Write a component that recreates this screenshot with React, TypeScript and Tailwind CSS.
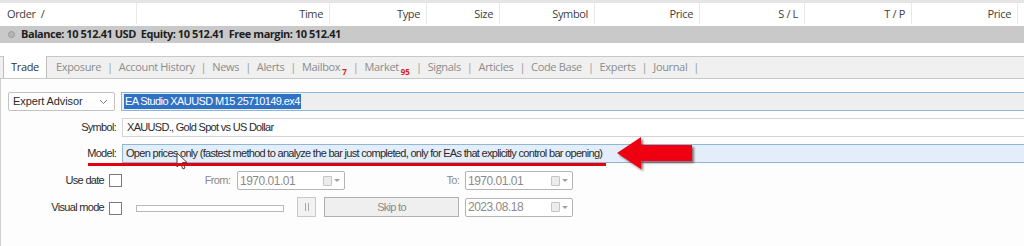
import React from "react";

const uiFont = { fontFamily: '"Open Sans", "Noto Sans", sans-serif' };
const formFont = { fontFamily: '"Liberation Sans", Arial, sans-serif' };

type Col = { label: string; width: string; align: "left" | "right" };

const columns: Col[] = [
  { label: "Order  /", width: "w-[137px]", align: "left" },
  { label: "Time", width: "w-[193px]", align: "right" },
  { label: "Type", width: "w-[97px]", align: "right" },
  { label: "Size", width: "w-[73px]", align: "right" },
  { label: "Symbol", width: "w-[95px]", align: "right" },
  { label: "Price", width: "w-[105px]", align: "right" },
  { label: "S / L", width: "w-[105px]", align: "right" },
  { label: "T / P", width: "w-[107px]", align: "right" },
  { label: "Price", width: "w-[106px]", align: "right" },
];

const tabs: { label: string; badge?: string }[] = [
  { label: "Exposure" },
  { label: "Account History" },
  { label: "News" },
  { label: "Alerts" },
  { label: "Mailbox", badge: "7" },
  { label: "Market", badge: "95" },
  { label: "Signals" },
  { label: "Articles" },
  { label: "Code Base" },
  { label: "Experts" },
  { label: "Journal" },
];

function Checkbox() {
  return <div className="h-[13px] w-[13px] shrink-0 border border-[#7a7a7a] bg-white" />;
}

function DateInput({ value }: { value: string }) {
  return (
    <div className="flex h-[19px] w-[108px] shrink-0 items-center justify-between rounded-[2px] border border-[#b4b4b4] bg-white pl-[2px] pr-[4px]">
      <span className="text-[12px] tracking-[-0.5px] text-[#8a8a8a]" style={formFont}>
        {value}
      </span>
      <span className="flex items-center gap-[2px]">
        <span className="h-[10px] w-[9px] rounded-[1px] border border-[#c4c4c4] bg-[#ececec]" />
        <span className="h-0 w-0 border-x-[3px] border-t-[3px] border-x-transparent border-t-[#a0a0a0]" />
      </span>
    </div>
  );
}

export default function App() {
  return (
    <div className="relative h-[246px] w-[1024px] overflow-hidden bg-white text-[#333]">
      {/* column header */}
      <div className="border-t-[3px] border-[#e4e4e4]">
        <div className="flex h-[21px] items-center text-[11px] tracking-[-0.35px] text-[#404040]" style={uiFont}>
          {columns.map((c, i) => (
            <div
              key={i}
              className={`${c.width} h-full shrink-0 border-r border-[#e8e8e8] leading-[21px] ${
                c.align === "right" ? "pr-[6px] text-right" : "pl-[7px] text-left whitespace-pre"
              }`}
            >
              {c.label}
            </div>
          ))}
        </div>
      </div>

      {/* balance row */}
      <div
        className="mt-[2px] flex h-[17px] items-center gap-[6px] bg-[#c9c9c9] pl-[8px] text-[11px] font-bold text-[#1e1e1e]"
        style={uiFont}
      >
        <span className="h-[7px] w-[7px] rounded-full border border-[#9a9a9a] bg-[#b4b4b4]" />
        <span className="whitespace-pre tracking-[-0.45px]">
          Balance: 10 512.41 USD  Equity: 10 512.41  Free margin: 10 512.41
        </span>
      </div>

      {/* tabs */}
      <div
        className="mt-[13px] flex h-[23px] items-end border-y border-[#c8c8c8] bg-[#f0f0f0] text-[11px] tracking-[-0.35px]"
        style={uiFont}
      >
        <div className="ml-[3px] flex h-[22px] w-[44px] items-center justify-center border-x border-[#bdbdbd] bg-white text-[#333]">
          Trade
        </div>
        <div className="flex h-full items-center gap-[6px] pl-[9px] text-[#8c8c8c]">
          {tabs.map((t, i) => (
            <React.Fragment key={t.label}>
              {i > 0 && <span className="text-[#9a9a9a]">|</span>}
              <span className="flex items-center">
                {t.label}
                {t.badge && (
                  <span className="ml-[2px] mt-[8px] text-[8px] font-bold leading-none tracking-normal text-[#d42020]">
                    {t.badge}
                  </span>
                )}
              </span>
            </React.Fragment>
          ))}
          <span className="text-[#9a9a9a]">|</span>
        </div>
      </div>

      {/* tester settings */}
      <div
        className="h-[168px] border-l border-[#d0d0d0] bg-[#fdfdfd] pt-[13px] text-[11px] tracking-[-0.7px] text-[#2a2a2a]"
        style={formFont}
      >
        <div className="flex h-[19px] items-stretch">
          <div className="ml-[7px] flex w-[107px] items-center justify-between rounded-[2px] border border-[#c2c2c2] bg-white pl-[4px] pr-[6px]">
            <span className="tracking-[-0.1px]">Expert Advisor</span>
            <svg width="9" height="6" viewBox="0 0 9 6" fill="none">
              <path d="M1 1 L4.5 4.5 L8 1" stroke="#7a7a7a" strokeWidth="1" />
            </svg>
          </div>
          <div className="ml-[6px] flex flex-1 items-center border-y border-l border-[#8fb6d2] bg-[#eeeeee] pl-[2px]">
            <span className="bg-[#2f71c4] px-[1px] text-[11px] leading-[15px] tracking-[-0.6px] text-white">
              EA Studio XAUUSD M15 25710149.ex4
            </span>
          </div>
        </div>

        <div className="mt-[7px] flex h-[19px] items-stretch">
          <div className="flex w-[115px] items-center justify-end">Symbol:</div>
          <div className="ml-[6px] flex flex-1 items-center border-y border-l border-[#d4d4d4] bg-white pl-[4px]">
            XAUUSD., Gold Spot vs US Dollar
          </div>
        </div>

        <div className="mt-[7px] flex h-[19px] items-stretch">
          <div className="flex w-[115px] items-center justify-end">Model:</div>
          <div className="ml-[6px] flex flex-1 items-center border-y border-l border-[#8fb6d2] bg-[#e4eefa] pl-[3px]">
            Open prices only (fastest method to analyze the bar just completed, only for EAs that explicitly control bar opening)
          </div>
        </div>

        <div className="mt-[8px] flex h-[19px] items-center">
          <div className="w-[105px] pr-[2px] text-right">Use date</div>
          <div className="ml-[3px]">
            <Checkbox />
          </div>
          <div className="w-[108px] text-right text-[#8a8a8a]">From:</div>
          <div className="ml-[7px]">
            <DateInput value="1970.01.01" />
          </div>
          <div className="w-[114px] text-right text-[#8a8a8a]">To:</div>
          <div className="ml-[6px]">
            <DateInput value="1970.01.01" />
          </div>
        </div>

        <div className="mt-[7px] flex h-[20px] items-center">
          <div className="w-[105px] pr-[2px] text-right">Visual mode</div>
          <div className="ml-[3px] mt-[3px]">
            <Checkbox />
          </div>
          <div className="ml-[14px] mt-[2px] h-[7px] w-[148px] border border-[#b8b8b8] bg-white" />
          <div className="ml-[13px] flex h-[20px] w-[19px] items-center justify-center gap-[2px] border border-[#c8c8c8] bg-[#f2f2f2]">
            <span className="h-[8px] w-px bg-[#a8a8a8]" />
            <span className="h-[8px] w-px bg-[#a8a8a8]" />
          </div>
          <div className="ml-[8px] flex h-[20px] w-[135px] items-center justify-center border border-[#b0b0b0] bg-[#efefef] text-[#8a8a8a]">
            Skip to
          </div>
          <div className="ml-[6px]">
            <DateInput value="2023.08.18" />
          </div>
        </div>
      </div>

      {/* mouse cursor */}
      <svg className="absolute left-[176px] top-[152px]" width="12" height="19" viewBox="0 0 12 19">
        <path d="M1 1 L1 15 L4.5 11.5 L7 17 L9 16 L6.5 10.5 L11 10.5 Z" fill="#fff" stroke="#444" strokeWidth="1" />
      </svg>

      {/* red underline annotation */}
      <div className="absolute left-[88px] top-[163px] h-[3px] w-[518px] bg-[#e3000f]" />

      {/* red arrow annotation */}
      <svg
        className="absolute left-[612px] top-[133px] drop-shadow-[2px_2px_1px_rgba(60,0,0,0.55)]"
        width="86"
        height="42"
        viewBox="0 0 86 42"
      >
        <polygon points="5,20 29,4 29,12 80,12 80,28 29,28 29,36" fill="#ee0010" />
      </svg>
    </div>
  );
}
